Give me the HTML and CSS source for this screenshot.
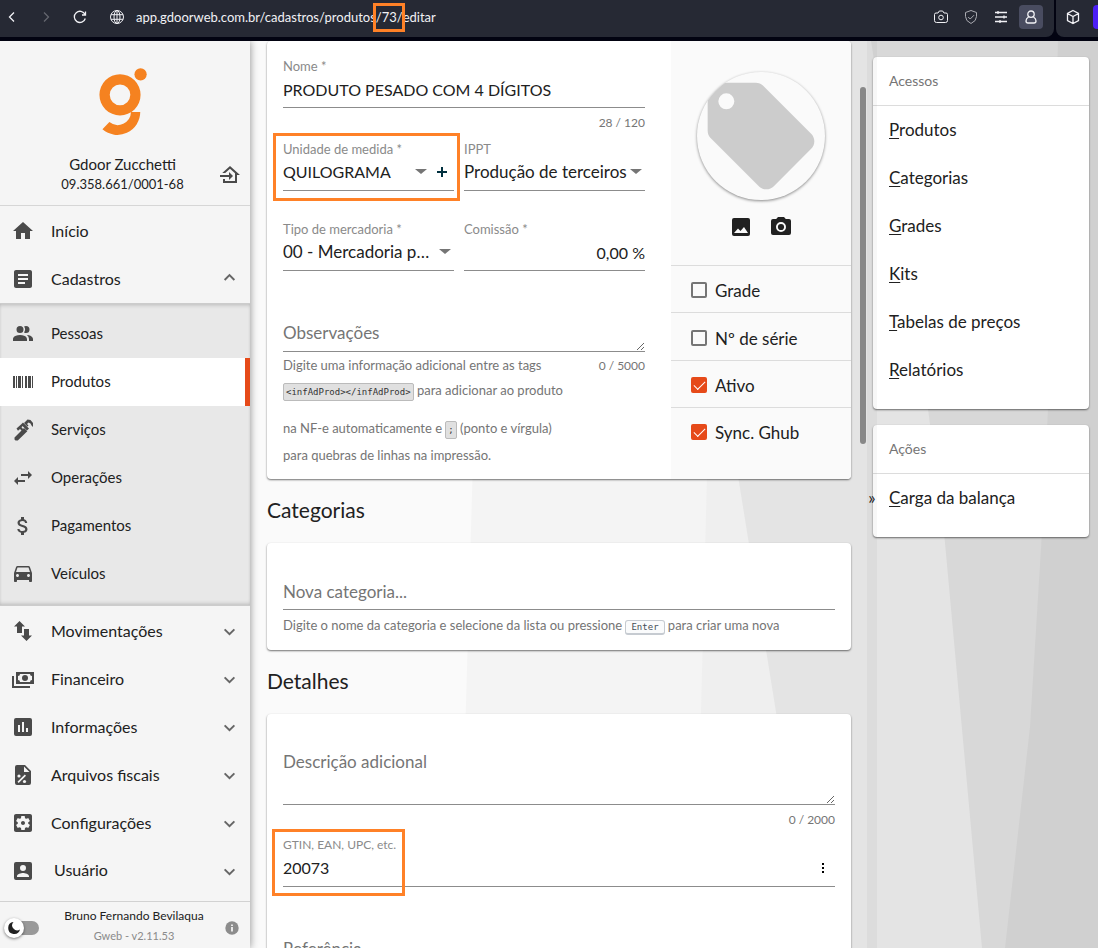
FILE: index.html
```html
<!DOCTYPE html>
<html lang="pt-BR">
<head>
<meta charset="utf-8">
<meta name="viewport" content="width=device-width, initial-scale=1">
<title>Gweb - Produtos</title>
<link rel="stylesheet" href="styles.css">
</head>
<body>
<header class="browser">
  <div class="browser-main">
    <button class="nav-btn" aria-label="Voltar"><svg class="line-icon" viewBox="0 0 16 16"><path d="M10 3.5 5.500 8l4.500 4.500"/></svg></button>
    <button class="nav-btn dim" aria-label="Avançar"><svg class="line-icon" viewBox="0 0 16 16"><path d="M6 3.500 10.500 8 6 12.500"/></svg></button>
    <button class="nav-btn" aria-label="Recarregar"><svg class="line-icon" viewBox="0 0 16 16"><path d="M13.300 9.500A5.600 5.600 0 1 1 13 5.500M13.500 2.500v3.500h-3.500"/></svg></button>
    <div class="address">
      <svg class="line-icon thin" viewBox="0 0 16 16"><circle cx="8" cy="8" r="6.500"/><ellipse cx="8" cy="8" rx="3" ry="6.500"/><path d="M8 1.500v13M2 5.700h12M2 10.300h12"/></svg>
      <span class="url">app.gdoorweb.com.br/cadastros/produtos<span class="marked">/73/<i class="marker marker-url"></i></span>editar</span>
    </div>
    <button class="tool" aria-label="Captura"><svg class="line-icon thin" viewBox="0 0 16 16"><path d="M1.500 5.500q0-1.500 1.500-1.500h2l1.300-2h3.400l1.300 2h2q1.500 0 1.500 1.500v6q0 2-2 2h-9q-2 0-2-2z"/><circle cx="8" cy="8.500" r="2.300"/></svg></button>
    <button class="tool dim-light" aria-label="Proteção"><svg class="line-icon thin" viewBox="0 0 16 16"><path d="M8 1.500 13.500 3.500v4q0 4.500-5.500 7-5.500-2.500-5.500-7v-4zM5.200 8l2 2L11 6.200"/></svg></button>
    <button class="tool" aria-label="Ajustes"><svg class="line-icon" viewBox="0 0 16 16"><path d="M2 3.500h12M2 8h12M2 12.500h12M5 2v3M11 6.500v3M7 11v3"/></svg></button>
    <button class="tool profile" aria-label="Perfil"><svg class="line-icon" viewBox="0 0 16 16"><circle cx="8" cy="5.200" r="3.200"/><path d="M5.500 8Q3 9.500 3 12q0 2 2 2h6q2 0 2-2 0-2.500-2.500-4"/></svg></button>
  </div>
  <div class="browser-side">
    <button class="tool" aria-label="Extensões"><svg class="line-icon" viewBox="0 0 16 16"><path d="M8 1.500 13.500 4.500v7L8 14.500l-5.500-3v-7zM2.500 4.500 8 7.500l5.500-3M8 7.500v7"/></svg></button>
    <span class="tab-accent"></span>
  </div>
</header>

<div class="app">
  <svg class="backdrop" viewBox="0 0 1098 907" preserveAspectRatio="none" aria-hidden="true">
    <path fill="#fafafa" d="M0 0h1098v907H0z"/>
    <path fill="#f4f4f4" d="M485 0h613v907H459z"/>
    <path fill="#efefef" d="M718 0h380v907H695z"/>
    <path fill="#e4e4e4" d="M668 0h430v907H814z"/>
    <path fill="#d8d8d8" d="M871 0h227v907H982L944 491 928 368z"/>
    <path fill="#d0d0d0" d="M1058 0h40v907h-93l25-221 12-195 6-123z"/>
  </svg>

  <nav class="sidebar" aria-label="Menu principal">
    <div class="company">
      <div class="company-info">
        <svg class="logo" viewBox="296 68 144 205" aria-label="Gdoor"><g fill="#f58220"><path fill-rule="evenodd" d="M359 87a62 62 0 1 0 0 124 62 62 0 0 0 0-124zm0 31a31 31 0 1 1 0 62 31 31 0 0 1 0-62z"/><circle cx="421" cy="87" r="18.500"/><path d="M420 201A69 69 0 0 1 306 253L327 231A40 40 0 0 0 392 201z"/></g></svg>
        <span class="company-name">Gdoor Zucchetti</span>
        <span class="company-id">09.358.661/0001-68</span>
      </div>
      <button class="switch-company" aria-label="Trocar empresa"><svg class="icon" viewBox="0 0 24 24"><path d="M15 13l-4 4v-3H2v-2h9V9l4 4M5 20v-4h2v2h10v-7.810l-5-4.500L7.210 10H4.220L12 3l10 9h-3v8H5z"/></svg></button>
    </div>

    <div class="menu-group">
      <a class="item" href="#inicio"><svg class="icon" viewBox="0 0 24 24"><path d="M10 20v-6h4v6h5v-8h3L12 3 2 12h3v8z"/></svg><span>Início</span></a>
      <button class="item" aria-expanded="true"><svg class="icon" viewBox="0 0 24 24"><path d="M19 3H5c-1.100 0-2 .9-2 2v14c0 1.100.9 2 2 2h14c1.100 0 2-.9 2-2V5c0-1.100-.9-2-2-2zm-5 14H7v-2h7v2zm3-4H7v-2h10v2zm0-4H7V7h10v2z"/></svg><span>Cadastros</span><svg class="chevron" viewBox="0 0 12 12"><path d="M1.500 6.500 6 2l4.500 4.500"/></svg></button>
    </div>

    <div class="submenu">
      <a class="item" href="#pessoas"><svg class="icon" viewBox="0 0 24 24"><path d="M16 17v2H2v-2s0-4 7-4 7 4 7 4M12.500 7.500A3.500 3.500 0 1 0 9 11a3.500 3.500 0 0 0 3.500-3.500m3.440 5.500A5.320 5.320 0 0 1 18 17v2h4v-2s0-3.630-6.060-4M15 4a3.400 3.400 0 0 0-1.930.59 5 5 0 0 1 0 5.820A3.400 3.400 0 0 0 15 11a3.500 3.500 0 0 0 0-7z"/></svg><span>Pessoas</span></a>
      <a class="item active" href="#produtos" aria-current="page"><svg class="icon" viewBox="0 0 24 24"><path d="M2 6h2v12H2V6m3 0h1v12H5V6m2 0h3v12H7V6m4 0h1v12h-1V6m3 0h2v12h-2V6m3 0h3v12h-3V6m4 0h1v12h-1V6z"/></svg><span>Produtos</span></a>
      <a class="item" href="#servicos"><svg class="icon" viewBox="0 0 24 24"><path d="M3.500 19.500 13 10l3.300 3.300-9.500 9.200H4.500l-1-1zM10 6.500 12 4.500l6 6-2 2zM5.500 10.500l4.500-4 1.500 1.500-1 1.300 1.500 1.700-1.500 1.500-1.500-1.500-2 1.700zM13 5l3.500-3.500 3 .5 2.500 3v4l-1.500-1.500-1-2-2-1-1.500 1.500 1.500 1.500-1 1z"/></svg><span>Serviços</span></a>
      <a class="item" href="#operacoes"><svg class="icon" viewBox="0 0 24 24"><path d="M21 9l-4-4v3h-7v2h7v3l4-4zM7 11l-4 4 4 4v-3h7v-2H7v-3z"/></svg><span>Operações</span></a>
      <a class="item" href="#pagamentos"><svg class="icon" viewBox="0 0 24 24"><path d="M11.800 10.900c-2.270-.59-3-1.200-3-2.150 0-1.090 1.010-1.850 2.700-1.850 1.780 0 2.440.85 2.500 2.100h2.210c-.07-1.720-1.120-3.300-3.210-3.810V3h-3v2.160c-1.940.42-3.500 1.680-3.500 3.610 0 2.310 1.910 3.460 4.700 4.130 2.500.6 3 1.480 3 2.410 0 .69-.49 1.790-2.700 1.790-2.060 0-2.870-.92-2.980-2.100h-2.200c.12 2.190 1.760 3.420 3.680 3.830V21h3v-2.150c1.950-.37 3.500-1.500 3.500-3.550 0-2.840-2.430-3.810-4.700-4.400z"/></svg><span>Pagamentos</span></a>
      <a class="item" href="#veiculos"><svg class="icon" viewBox="0 0 24 24"><path d="M18.920 5.010C18.720 4.420 18.160 4 17.500 4h-11c-.66 0-1.210.42-1.420 1.010L3 11v8c0 .55.45 1 1 1h1c.55 0 1-.45 1-1v-1h12v1c0 .55.45 1 1 1h1c.55 0 1-.45 1-1v-8l-2.080-5.990zM6.500 15c-.83 0-1.500-.67-1.500-1.500S5.670 12 6.500 12s1.500.67 1.500 1.500S7.330 15 6.500 15zm11 0c-.83 0-1.500-.67-1.500-1.500s.67-1.500 1.500-1.500 1.500.67 1.500 1.500-.67 1.500-1.500 1.500zM5 10l1.500-4.500h11L19 10H5z"/></svg><span>Veículos</span></a>
    </div>

    <div class="menu-group">
      <button class="item"><svg class="icon" viewBox="0 0 24 24"><path d="M8.500 2 3 7.500h3V14h5V7.500h3zM13 10v6.500h-3L15.500 22l5.500-5.500h-3V10z"/></svg><span>Movimentações</span><svg class="chevron" viewBox="0 0 12 12"><path d="M1.500 4 6 8.500 10.500 4"/></svg></button>
      <button class="item"><svg class="icon" viewBox="0 0 24 24"><path fill-rule="evenodd" d="M5 5h18v12H5zM9 7a2 2 0 0 1-2 2v4a2 2 0 0 1 2 2h10a2 2 0 0 1 2-2V9a2 2 0 0 1-2-2zM1 9h2v10h16v2H1z"/><circle cx="14" cy="11" r="3"/></svg><span>Financeiro</span><svg class="chevron" viewBox="0 0 12 12"><path d="M1.500 4 6 8.500 10.500 4"/></svg></button>
      <button class="item"><svg class="icon" viewBox="0 0 24 24"><path fill-rule="evenodd" d="M5 3h14a2 2 0 0 1 2 2v14a2 2 0 0 1-2 2H5a2 2 0 0 1-2-2V5a2 2 0 0 1 2-2zM7 10v7h2v-7zM11 7v10h2V7zM15 13v4h2v-4z"/></svg><span>Informações</span><svg class="chevron" viewBox="0 0 12 12"><path d="M1.500 4 6 8.500 10.500 4"/></svg></button>
      <button class="item"><svg class="icon" viewBox="0 0 24 24"><path fill-rule="evenodd" d="M14 2H6a2 2 0 0 0-2 2v16a2 2 0 0 0 2 2h12a2 2 0 0 0 2-2V8zM13 3.500 18.500 9H13z"/><g fill="#f5f5f5"><circle cx="8" cy="13" r="1.600"/><circle cx="13.500" cy="18.500" r="1.600"/><path d="M13.800 11.500 15 12.700 7.700 20l-1.200-1.200z"/></g></svg><span>Arquivos fiscais</span><svg class="chevron" viewBox="0 0 12 12"><path d="M1.500 4 6 8.500 10.500 4"/></svg></button>
      <button class="item"><svg class="icon" viewBox="0 0 24 24"><path d="M12 10c-1.100 0-2 .9-2 2s.9 2 2 2 2-.9 2-2-.9-2-2-2zm7-7H5c-1.110 0-2 .9-2 2v14c0 1.100.89 2 2 2h14c1.110 0 2-.9 2-2V5c0-1.100-.89-2-2-2zm-1.750 9c0 .23-.02.46-.05.68l1.480 1.160c.13.11.17.3.08.45l-1.400 2.420c-.09.15-.27.21-.43.15l-1.740-.7c-.36.28-.76.51-1.180.69l-.26 1.850c-.03.17-.18.3-.35.3h-2.800c-.17 0-.32-.13-.35-.29l-.26-1.850c-.43-.18-.82-.41-1.180-.69l-1.740.7c-.16.06-.34 0-.43-.15l-1.400-2.420c-.09-.15-.05-.34.08-.45l1.480-1.160c-.03-.23-.05-.46-.05-.69 0-.23.02-.46.05-.68l-1.480-1.160c-.13-.11-.17-.3-.08-.45l1.400-2.420c.09-.15.27-.21.43-.15l1.740.7c.36-.28.76-.51 1.180-.69l.26-1.850c.03-.17.18-.3.35-.3h2.800c.17 0 .32.13.35.29l.26 1.850c.43.18.82.41 1.180.69l1.740-.7c.16-.06.34 0 .43.15l1.400 2.420c.09.15.05.34-.08.45l-1.480 1.160c.03.23.05.46.05.69z"/></svg><span>Configurações</span><svg class="chevron" viewBox="0 0 12 12"><path d="M1.500 4 6 8.500 10.500 4"/></svg></button>
      <button class="item user"><svg class="icon" viewBox="0 0 24 24"><path d="M6 17c0-2 4-3.100 6-3.100s6 1.100 6 3.100v1H6m9-9a3 3 0 0 1-3 3 3 3 0 0 1-3-3 3 3 0 0 1 3-3 3 3 0 0 1 3 3M3 5v14a2 2 0 0 0 2 2h14a2 2 0 0 0 2-2V5a2 2 0 0 0-2-2H5a2 2 0 0 0-2 2z"/></svg><span>Usuário</span><svg class="chevron" viewBox="0 0 12 12"><path d="M1.500 4 6 8.500 10.500 4"/></svg></button>
    </div>

    <footer class="account">
      <label class="theme"><input type="checkbox" class="theme-input" aria-label="Tema escuro"><span class="knob"><svg viewBox="0 0 14 14"><path fill="#212121" d="M6.500 1A6 6 0 1 0 13 8.500 5 5 0 0 1 6.500 1z"/></svg></span></label>
      <div class="account-text"><span class="account-name">Bruno Fernando Bevilaqua</span><span class="version">Gweb - v2.11.53</span></div>
      <button class="info" aria-label="Sobre"><svg viewBox="0 0 14 14"><circle cx="7" cy="7" r="6.700" fill="#8c8c8c"/><path fill="#fff" d="M6.200 6h1.600v4.500H6.200zM6.200 3.500h1.600V5H6.200z"/></svg></button>
    </footer>
  </nav>

  <main class="content">
    <section class="card product">
      <div class="product-form">
        <div class="field">
          <label for="nome">Nome *</label>
          <input id="nome" class="control compact" type="text" value="PRODUTO PESADO COM 4 DÍGITOS">
        </div>
        <span class="counter">28 / 120</span>
        <div class="pair first">
          <div class="field">
            <label for="unidade">Unidade de medida *</label>
            <div class="control with-add">
              <span class="select-wrap"><select id="unidade" class="compact"><option>QUILOGRAMA</option></select></span>
              <button class="add" aria-label="Adicionar unidade"><svg viewBox="0 0 10 10"><path d="M5 0v10M0 5h10" stroke="#01303f" stroke-width="2"/></svg></button>
            </div>
            <i class="marker marker-unit"></i>
          </div>
          <div class="field">
            <label for="ippt">IPPT</label>
            <div class="control"><span class="select-wrap"><select id="ippt" class="long"><option>Produção de terceiros</option></select></span></div>
          </div>
        </div>
        <div class="pair second">
          <div class="field">
            <label for="tipo">Tipo de mercadoria *</label>
            <div class="control"><span class="select-wrap"><select id="tipo"><option>00 - Mercadoria para revenda</option></select></span></div>
          </div>
          <div class="field">
            <label for="comissao">Comissão *</label>
            <input id="comissao" class="control compact number" type="text" value="0,00 %">
          </div>
        </div>
        <textarea class="control notes" aria-label="Observações" placeholder="Observações" rows="1"></textarea>
        <div class="hint-row">
          <div class="hint">
            <p>Digite uma informação adicional entre as tags</p>
            <p><code>&lt;infAdProd&gt;&lt;/infAdProd&gt;</code> para adicionar ao produto</p>
            <p class="spaced">na NF-e automaticamente e <code>;</code> (ponto e vírgula)</p>
            <p>para quebras de linhas na impressão.</p>
          </div>
          <span class="hint-count">0 / 5000</span>
        </div>
      </div>
      <div class="product-side">
        <div class="photo-area">
          <div class="photo"><svg viewBox="0 0 24 24"><path fill="#ccc" d="M5.500 7A1.500 1.500 0 0 1 4 5.500 1.500 1.500 0 0 1 5.500 4 1.500 1.500 0 0 1 7 5.500 1.500 1.500 0 0 1 5.500 7m15.910 4.580l-9-9C12.050 2.220 11.550 2 11 2H4c-1.110 0-2 .89-2 2v7c0 .55.22 1.050.59 1.410l9 9c.36.36.86.59 1.410.59s1.050-.23 1.410-.59l7-7c.37-.36.59-.86.59-1.410 0-.56-.23-1.060-.59-1.420z"/></svg></div>
          <div class="photo-actions">
            <button aria-label="Escolher imagem"><svg viewBox="0 0 24 24"><path fill-rule="evenodd" d="M5 3h14a2 2 0 0 1 2 2v14a2 2 0 0 1-2 2H5a2 2 0 0 1-2-2V5a2 2 0 0 1 2-2zM5 18h14l-4-6-3.500 4L9 13.500z"/></svg></button>
            <button aria-label="Tirar foto"><svg viewBox="0 0 24 24"><path fill-rule="evenodd" d="M9 2 7.200 4H4a2 2 0 0 0-2 2v12a2 2 0 0 0 2 2h16a2 2 0 0 0 2-2V6a2 2 0 0 0-2-2h-3.200L15 2zM12 7a5 5 0 1 1 0 10 5 5 0 0 1 0-10z"/><circle cx="12" cy="12" r="3.100"/></svg></button>
          </div>
        </div>
        <label class="check"><input type="checkbox"><span>Grade</span></label>
        <label class="check tall"><input type="checkbox"><span>Nº de série</span></label>
        <label class="check"><input type="checkbox" checked><span>Ativo</span></label>
        <label class="check"><input type="checkbox" checked><span>Sync. Ghub</span></label>
      </div>
    </section>

    <h2>Categorias</h2>
    <section class="card categories">
      <input class="control" type="text" aria-label="Nova categoria" placeholder="Nova categoria...">
      <p class="hint-line">Digite o nome da categoria e selecione da lista ou pressione <kbd>Enter</kbd> para criar uma nova</p>
    </section>

    <h2>Detalhes</h2>
    <section class="card details">
      <textarea class="control description" aria-label="Descrição adicional" placeholder="Descrição adicional" rows="2"></textarea>
      <span class="counter">0 / 2000</span>
      <div class="field gtin">
        <label for="gtin">GTIN, EAN, UPC, etc.</label>
        <div class="control with-menu">
          <input id="gtin" class="compact" type="text" value="20073">
          <button class="more" aria-label="Mais opções"><svg viewBox="0 0 4 12"><path d="M1 1h2v2H1zM1 5h2v2H1zM1 9h2v2H1z"/></svg></button>
        </div>
        <i class="marker marker-gtin"></i>
      </div>
      <input class="control reference" type="text" aria-label="Referência" placeholder="Referência">
    </section>
    <i class="scroll-thumb"></i>
  </main>

  <aside class="shortcuts">
    <section class="card panel">
      <h3>Acessos</h3>
      <a href="#p"><u>P</u>rodutos</a>
      <a href="#c"><u>C</u>ategorias</a>
      <a href="#g"><u>G</u>rades</a>
      <a href="#k"><u>K</u>its</a>
      <a href="#t"><u>T</u>abelas de preços</a>
      <a href="#r"><u>R</u>elatórios</a>
    </section>
    <section class="card panel">
      <h3>Ações</h3>
      <a href="#b"><u>C</u>arga da balança</a>
    </section>
    <button class="collapse" aria-label="Recolher painel">»</button>
  </aside>
</div>
</body>
</html>
```
FILE: styles.css
```css
* { box-sizing: border-box; }
body {
  margin: 0;
  height: 100vh;
  display: flex;
  flex-direction: column;
  overflow: hidden;
  background: #020311;
  color: #212121;
  font-family: Lato, "Open Sans", sans-serif;
  font-size: 17px;
}
button { border: 0; padding: 0; background: none; color: inherit; font: inherit; cursor: pointer; }
input, select, textarea { font: inherit; color: inherit; }
a { color: inherit; text-decoration: none; }
p, h2, h3 { margin: 0; font-weight: 400; }

.browser { display: flex; gap: 2px; height: 37px; flex: none; margin-bottom: 4px; color: #f1f1f5; }
.browser-main { flex: 1; display: flex; align-items: center; background: #262934; border-radius: 0 0 8px 0; padding: 0 11px 3px 4px; }
.browser-side { width: 42px; display: flex; align-items: center; justify-content: space-between; background: #262934; border-radius: 0 0 0 8px; padding: 0 0 3px 9px; }
.nav-btn { width: 16px; height: 16px; margin-right: 18px; }
.dim { opacity: .3; }
.dim-light { opacity: .65; }
.line-icon { display: block; width: 16px; height: 16px; fill: none; stroke: currentColor; stroke-width: 1.3; flex: none; }
.line-icon.thin { stroke-width: 1; }
.address { flex: 1; display: flex; align-items: center; gap: 11px; margin-left: 3px; font-size: 13px; }
.marked { position: relative; }
.marker { position: absolute; border: 3px solid #ff8127; pointer-events: none; z-index: 3; }
.marker-url { inset: -6px -2px -7px -3px; }
.tool { width: 24px; height: 24px; display: grid; place-items: center; margin-left: 6px; }
.browser-side .tool { margin: 0; width: 16px; }
.profile { background: #494c60; border-radius: 4px; }
.tab-accent { width: 5px; height: 24px; background: #4b1ff5; border-radius: 4px 0 0 4px; }

.app { position: relative; flex: 1; min-height: 0; display: flex; overflow: hidden; }
.backdrop { position: absolute; inset: 0; width: 100%; height: 100%; }

.sidebar {
  position: relative;
  z-index: 2;
  width: 250px;
  flex: none;
  display: flex;
  flex-direction: column;
  background: #f5f5f5;
  box-shadow: 0 0 8px rgba(0, 0, 0, .45);
}
.company { display: grid; grid-template-columns: 35px 1fr 40px; padding: 27px 0 11px; border-bottom: 1px solid #d6d6d6; }
.company-info { grid-column: 2; display: flex; flex-direction: column; align-items: center; }
.logo { width: 48px; height: 68px; margin-bottom: 18px; }
.company-name { font-size: 15px; line-height: 20px; }
.company-id { font-size: 13px; line-height: 20px; }
.switch-company { align-self: end; height: 34px; justify-self: center; }
.icon { width: 24px; height: 24px; fill: #4a4a4a; flex: none; }
.item { width: 100%; height: 48px; display: flex; align-items: center; gap: 16px; padding: 0 14px 0 11px; text-align: left; font-size: 16px; }
.item span { flex: 1; padding-bottom: 2px; }
.item.user span { padding: 0 0 4px 3px; }
.chevron { width: 13px; height: 13px; fill: none; stroke: #666; stroke-width: 1.8; }
.menu-group { padding-top: 1px; }
.submenu { padding: 6px 0 7px; background: #e8e8e8; border-top: 1px solid #ccc; border-bottom: 1px solid #ccc; box-shadow: inset 0 3px 4px -2px rgba(0, 0, 0, .2), inset 0 -3px 4px -2px rgba(0, 0, 0, .2); }
.submenu .item { font-size: 15px; }
.submenu .active { background: #fff; border-right: 5px solid #e64a19; }
.account { display: flex; align-items: center; margin-top: auto; height: 47px; padding: 0 11px 0 4px; border-top: 1px solid #d2d2d2; }
.theme { position: relative; width: 35px; height: 20px; display: flex; align-items: center; justify-content: flex-end; margin-top: 5px; }
.theme-input { appearance: none; margin: 0; width: 26px; height: 14px; border-radius: 7px; background: #999; }
.knob { position: absolute; left: 0; top: 0; width: 20px; height: 20px; display: grid; place-items: center; border-radius: 50%; background: #fff; box-shadow: 0 1px 3px rgba(0, 0, 0, .5); }
.knob svg { width: 14px; height: 14px; }
.account-text { flex: 1; display: flex; flex-direction: column; align-items: center; font-size: 12px; line-height: 20px; padding: 2px 0 0 4px; }
.version { color: #8a8a8a; font-size: 11px; }
.info { width: 14px; height: 14px; margin-top: 5px; }
.info svg { display: block; }

.content { position: relative; flex: 1; min-width: 0; padding: 0 22px 0 17px; overflow: hidden; }
.card { background: #fff; border-radius: 4px; box-shadow: 0 1px 2px rgba(0, 0, 0, .55); }
.content h2 { font-size: 21px; line-height: 24px; padding: 19px 0 21px; }
.product { display: flex; }
.product-form { flex: 1; min-width: 0; padding: 17px 26px 11px 16px; }
.field { position: relative; min-width: 0; }
.field label { display: block; font-size: 13px; line-height: 16px; margin-bottom: 4px; color: #8a8a8a; }
.control { display: block; width: 100%; height: 30px; padding: 0 0 7px; border: 0; border-bottom: 1px solid #8c8c8c; border-radius: 0; background: none; line-height: 22px; outline: 0; }
.control::placeholder { color: #757575; opacity: 1; }
.compact { font-size: 16px; }
.number { text-align: right; }
.counter { display: block; text-align: right; font-size: 12px; line-height: 16px; color: #757575; margin-top: 7px; }
.pair { display: grid; grid-template-columns: 171px 1fr; gap: 10px; }
.first { margin-top: 10px; }
.second { margin-top: 30px; }
.select-wrap { position: relative; flex: 1; min-width: 0; display: block; }
.select-wrap::after { content: ""; position: absolute; right: 3px; top: 8px; border: 6px solid transparent; border-top: 5px solid #757575; border-bottom: 0; }
.select-wrap select { display: block; width: 100%; height: 22px; appearance: none; border: 0; padding: 0 20px 0 0; background: none; text-overflow: ellipsis; outline: 0; }
.select-wrap .long { padding-right: 14px; }
.with-add { display: flex; align-items: center; gap: 7px; }
.add { width: 10px; height: 10px; margin-right: 7px; }
.add svg { display: block; }
.marker-unit { inset: -8px -6px -10px -10px; }
.notes { margin-top: 50px; height: 31px; min-height: 31px; padding-bottom: 5px; line-height: 24px; resize: vertical; overflow: hidden; }
.hint-row { display: flex; justify-content: space-between; font-size: 13px; line-height: 25px; color: #757575; padding-top: 1px; }
.hint-count { font-size: 12px; }
.hint .spaced { margin: 13px 0 2px; }
code { font: 9px/16px "DejaVu Sans Mono", monospace; display: inline-block; padding: 0 2px; border: 1px solid #bbb; border-radius: 2px; background: #e0e0e0; color: #333; }
.product-side { width: 180px; flex: none; background: #fafafa; border-radius: 0 4px 4px 0; }
.photo-area { display: flex; flex-direction: column; align-items: center; padding: 31px 0 26px; }
.photo { width: 128px; height: 128px; border-radius: 50%; overflow: hidden; box-shadow: 0 1px 3px rgba(0, 0, 0, .45); background: #fafafa; }
.photo svg { display: block; }
.photo-actions { display: flex; gap: 16px; margin-top: 15px; }
.photo-actions button { width: 24px; height: 24px; }
.photo-actions svg { display: block; width: 24px; height: 24px; fill: #212121; }
.check { display: flex; align-items: center; gap: 8px; height: 47px; padding: 2px 20px 0; border-top: 1px solid #dcdcdc; }
.check.tall { height: 48px; padding-top: 3px; }
.check input { appearance: none; margin: 0; width: 16px; height: 16px; border: 2px solid #757575; border-radius: 2px; display: grid; place-items: center; }
.check input:checked { background: #e64a19; border-color: #e64a19; }
.check input:checked::before { content: ""; width: 10px; height: 5px; border: solid #fff; border-width: 0 0 1px 1px; transform: translateY(-1px) rotate(-45deg); }
.categories { padding: 37px 16px 15px; }
.hint-line { font-size: 13px; line-height: 16px; margin-top: 7px; color: #757575; }
kbd { display: inline-block; font: 9px/12px "DejaVu Sans Mono", monospace; padding: 0 5px; border: 1px solid #c6cbd1; border-bottom-width: 2px; border-radius: 3px; background: #fafbfc; color: #444d56; }
.details { padding: 37px 16px 16px; }
.description { height: 54px; resize: vertical; }
.gtin { margin-top: 9px; }
.gtin label { font-size: 12px; }
.with-menu { display: flex; align-items: center; }
.with-menu input { flex: 1; min-width: 0; border: 0; padding: 0; background: none; outline: 0; }
.more { width: 4px; height: 12px; margin-right: 10px; }
.more svg { display: block; }
.marker-gtin { left: -11px; top: -8px; width: 133px; height: 67px; }
.reference { margin-top: 50px; }
.scroll-thumb { position: absolute; right: 7px; top: 46px; width: 6px; height: 357px; border-radius: 3px; background: #888; }

.shortcuts { position: relative; width: 225px; flex: none; padding: 16px 9px 0 0; display: flex; flex-direction: column; gap: 16px; }
.shortcuts::before { content: ""; position: absolute; left: -6px; top: 0; bottom: 0; width: 10px; background: rgba(0, 0, 0, .03); z-index: 1; }
.panel { padding-bottom: 15px; }
.panel h3 { height: 49px; padding: 0 16px; border-bottom: 1px solid #dcdcdc; font-size: 14px; line-height: 48px; color: #757575; }
.panel a { display: block; padding: 0 16px; line-height: 48px; }
.panel u { text-underline-offset: 2px; }
.collapse { position: absolute; z-index: 2; left: -6px; top: 448px; width: 10px; font-size: 17px; line-height: 18px; }
```
